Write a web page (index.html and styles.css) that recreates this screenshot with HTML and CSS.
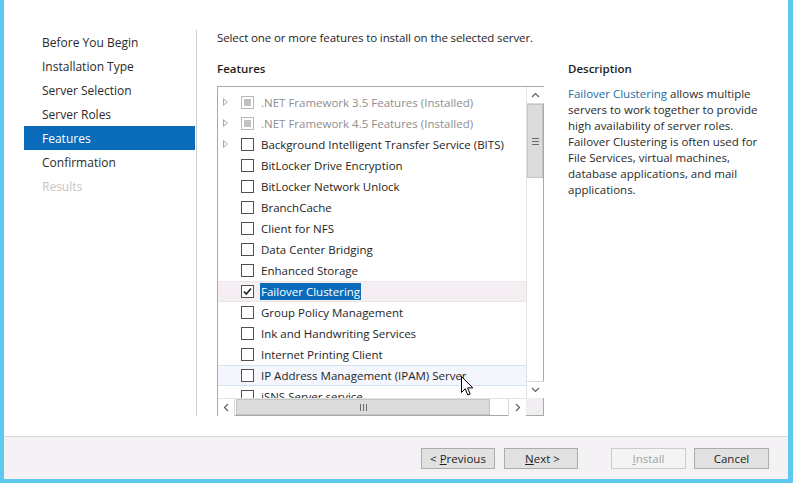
FILE: index.html
```html
<!DOCTYPE html>
<html lang="en">
<head>
<meta charset="utf-8">
<title>Add Roles and Features Wizard</title>
<link rel="stylesheet" href="styles.css">
</head>
<body>
<div class="dialog">
  <div class="main">
    <nav class="nav">
      <div class="nav-item">Before You Begin</div>
      <div class="nav-item">Installation Type</div>
      <div class="nav-item">Server Selection</div>
      <div class="nav-item">Server Roles</div>
      <div class="nav-item active">Features</div>
      <div class="nav-item">Confirmation</div>
      <div class="nav-item disabled">Results</div>
    </nav>
    <div class="content">
      <p class="intro">Select one or more features to install on the selected server.</p>
      <div class="columns">
        <section class="features">
          <h2 class="label">Features</h2>
          <div class="listbox">
            <div class="rows">
              <div class="row installed"><span class="exp"></span><span class="cb partial"></span><span class="txt">.NET Framework 3.5 Features (Installed)</span></div>
              <div class="row installed"><span class="exp"></span><span class="cb partial"></span><span class="txt">.NET Framework 4.5 Features (Installed)</span></div>
              <div class="row"><span class="exp"></span><span class="cb"></span><span class="txt">Background Intelligent Transfer Service (BITS)</span></div>
              <div class="row"><span class="exp none"></span><span class="cb"></span><span class="txt">BitLocker Drive Encryption</span></div>
              <div class="row"><span class="exp none"></span><span class="cb"></span><span class="txt">BitLocker Network Unlock</span></div>
              <div class="row"><span class="exp none"></span><span class="cb"></span><span class="txt">BranchCache</span></div>
              <div class="row"><span class="exp none"></span><span class="cb"></span><span class="txt">Client for NFS</span></div>
              <div class="row"><span class="exp none"></span><span class="cb"></span><span class="txt">Data Center Bridging</span></div>
              <div class="row"><span class="exp none"></span><span class="cb"></span><span class="txt">Enhanced Storage</span></div>
              <div class="row selected"><span class="exp none"></span><span class="cb checked"><svg viewBox="0 0 11 11" width="11" height="11"><path d="M2 5.5 L4.3 8 L9 2.5" fill="none" stroke="#222" stroke-width="1.6"/></svg></span><span class="txt sel">Failover Clustering</span></div>
              <div class="row"><span class="exp none"></span><span class="cb"></span><span class="txt">Group Policy Management</span></div>
              <div class="row"><span class="exp none"></span><span class="cb"></span><span class="txt">Ink and Handwriting Services</span></div>
              <div class="row"><span class="exp none"></span><span class="cb"></span><span class="txt">Internet Printing Client</span></div>
              <div class="row hover"><span class="exp none"></span><span class="cb"></span><span class="txt">IP Address Management (IPAM) Server</span></div>
              <div class="row"><span class="exp none"></span><span class="cb"></span><span class="txt">iSNS Server service</span></div>
            </div>
            <div class="vscroll">
              <div class="sbtn"><svg viewBox="0 0 9 6" width="9" height="6"><path d="M1 5 L4.5 1.5 L8 5" fill="none" stroke="#606060" stroke-width="1.2"/></svg></div>
              <div class="vthumb"><span class="grip-h"></span></div>
              <div class="vtrack"></div>
              <div class="sbtn"><svg viewBox="0 0 9 6" width="9" height="6"><path d="M1 1 L4.5 4.5 L8 1" fill="none" stroke="#606060" stroke-width="1.2"/></svg></div>
            </div>
            <div class="hscroll">
              <div class="sbtn"><svg viewBox="0 0 6 9" width="6" height="9"><path d="M5 1 L1.5 4.5 L5 8" fill="none" stroke="#606060" stroke-width="1.2"/></svg></div>
              <div class="hthumb"><span class="grip-v"></span></div>
              <div class="htrack"></div>
              <div class="sbtn"><svg viewBox="0 0 6 9" width="6" height="9"><path d="M1 1 L4.5 4.5 L1 8" fill="none" stroke="#606060" stroke-width="1.2"/></svg></div>
            </div>
            <div class="corner"></div>
            <svg class="cursor" viewBox="0 0 13 21" width="13" height="21"><path d="M0.5 0.5 L0.5 16.5 L4.2 12.8 L6.8 19 L9.2 18 L6.6 11.9 L11.8 11.9 Z" fill="#fff" stroke="#000" stroke-width="1"/></svg>
          </div>
        </section>
        <section class="description">
          <h2 class="label">Description</h2>
          <p class="desc-text"><span class="link">Failover Clustering</span> allows multiple servers to work together to provide high availability of server roles. Failover Clustering is often used for File Services, virtual machines, database applications, and mail applications.</p>
        </section>
      </div>
    </div>
  </div>
  <div class="footer">
    <button class="btn prev">&lt; <u>P</u>revious</button>
    <button class="btn next">&nbsp;<u>N</u>ext &gt;</button>
    <button class="btn off install"><u>I</u>nstall</button>
    <button class="btn cancel">Cancel</button>
  </div>
</div>
</body>
</html>
```

FILE: styles.css
```css
* { box-sizing: border-box; }
html, body { margin: 0; padding: 0; }
body {
  width: 793px;
  height: 483px;
  background: #5ec9ef;
  padding: 0 5px 4px 4px;
  font-family: "Open Sans", "Noto Sans", sans-serif;
  font-size: 11.5px;
  color: #1e1e1e;
  overflow: hidden;
}
.dialog {
  background: #fff;
  height: 479px;
  display: flex;
  flex-direction: column;
}
.main {
  flex: 1;
  display: flex;
  min-height: 0;
}
.nav {
  margin-top: 30px;
  height: 386px;
  width: 193px;
  padding-left: 20px;
  border-right: 1px solid #cfcfcf;
  flex: none;
}
.nav-item {
  height: 24px;
  line-height: 22px;
  padding-top: 2px;
  padding-left: 18px;
  margin-right: 1px;
  font-size: 12px;
  color: #2a2a2a;
  white-space: nowrap;
}
.nav-item.active { background: #0b6bbb; color: #fff; }
.nav-item.disabled { color: #c4c4c4; }
.content {
  padding: 30px 0 0 20px;
  flex: 1;
  min-width: 0;
}
.intro {
  margin: 0;
  line-height: 16px;
  height: 16px;
  font-size: 11.5px;
  letter-spacing: -0.1px;
}
.columns {
  display: flex;
  gap: 24px;
  margin-top: 15px;
}
.label {
  margin: 0;
  font-size: 11.5px;
  font-weight: 600;
  line-height: 16px;
  height: 25px;
}
.features { width: 327px; flex: none; }
.listbox {
  position: relative;
  height: 330px;
  border: 1px solid #a9a9a9;
  display: grid;
  grid-template-columns: 1fr 17px;
  grid-template-rows: 1fr 17px;
}
.rows {
  padding-top: 5px;
  overflow: hidden;
  min-height: 0;
}
.row {
  height: 21px;
  display: flex;
  align-items: center;
  white-space: nowrap;
  border-top: 1px solid transparent;
  border-bottom: 1px solid transparent;
}
.row.selected { background: #f5eff4; border-color: #ece4ea; }
.row.hover { background: #f3f7fd; border-color: #d3e2f4; }
.exp {
  width: 23px;
  height: 9px;
  flex: none;
  position: relative;
}
.exp::before {
  content: "";
  position: absolute;
  left: 5px;
  top: 0;
  border-left: 5px solid #a8a8a8;
  border-top: 4.5px solid transparent;
  border-bottom: 4.5px solid transparent;
}
.exp::after {
  content: "";
  position: absolute;
  left: 6px;
  top: 2px;
  border-left: 3px solid #fff;
  border-top: 2.5px solid transparent;
  border-bottom: 2.5px solid transparent;
}
.exp.none::before, .exp.none::after { display: none; }
.cb {
  width: 13px;
  height: 13px;
  border: 1px solid #505050;
  background: #fff;
  flex: none;
  margin-right: 7px;
  display: flex;
  align-items: center;
  justify-content: center;
}
.cb.partial { border-color: #b8b8b8; }
.cb.partial::after {
  content: "";
  width: 7px;
  height: 7px;
  background: #c2c2c2;
}
.txt { line-height: 17px; font-size: 11.5px; }
.installed .txt { color: #8e8e8e; }
.txt.sel {
  background: #0b6bbb;
  color: #fff;
  padding: 0 1px;
  margin-left: -1px;
}
.vscroll {
  display: flex;
  flex-direction: column;
  border-left: 1px solid #e3e3e3;
  background: #fff;
}
.hscroll {
  display: flex;
  border-top: 1px solid #e3e3e3;
  background: #fff;
}
.sbtn {
  width: 17px;
  height: 17px;
  flex: none;
  display: flex;
  align-items: center;
  justify-content: center;
  background: #fff;
}
.vscroll .sbtn:first-child { border-bottom: 1px solid #d9d9d9; }
.vscroll .sbtn:last-child { border-top: 1px solid #d9d9d9; }
.hscroll .sbtn:first-child { border-right: 1px solid #d9d9d9; width: 17px; }
.hscroll .sbtn:last-child { border-left: 1px solid #d9d9d9; width: 18px; }
.vthumb {
  height: 74px;
  background: #dcdcdc;
  border: 1px solid #c4c4c4;
  display: flex;
  align-items: center;
  justify-content: center;
  flex: none;
}
.vtrack, .htrack { flex: 1; }
.hthumb {
  width: 254px;
  background: #dcdcdc;
  border: 1px solid #c4c4c4;
  margin-left: 1px;
  display: flex;
  align-items: center;
  justify-content: center;
  flex: none;
}
.grip-h {
  width: 7px;
  height: 7px;
  background: repeating-linear-gradient(#6a6a6a 0 1px, transparent 1px 3px);
}
.grip-v {
  width: 7px;
  height: 7px;
  background: repeating-linear-gradient(90deg, #6a6a6a 0 1px, transparent 1px 3px);
}
.corner { background: #f1eef1; }
.cursor {
  position: absolute;
  left: 243px;
  top: 289px;
}
.description { width: 200px; flex: none; }
.desc-text {
  margin: 0;
  line-height: 16px;
  font-size: 11.5px;
  color: #2a2a2a;
}
.link { color: #1c6ea4; }
.footer {
  height: 43px;
  flex: none;
  border-top: 1px solid #dadada;
  background: #f4f2f5;
  display: flex;
  align-items: flex-start;
  justify-content: flex-end;
  padding: 11px 19px 0 0;
  gap: 8px;
}
.btn {
  width: 75px;
  height: 21px;
  padding: 0;
  background: #e1e1e1;
  border: 1px solid #adadad;
  font-family: inherit;
  font-size: 11.5px;
  color: #1e1e1e;
  line-height: 19px;
}
.btn.prev, .btn.next { width: 74px; }
.btn.next { margin-left: 1px; }
.btn.install { margin-left: 25px; }
.btn.off {
  background: #f4f4f4;
  border-color: #cccccc;
  color: #a2a2a2;
}
```
